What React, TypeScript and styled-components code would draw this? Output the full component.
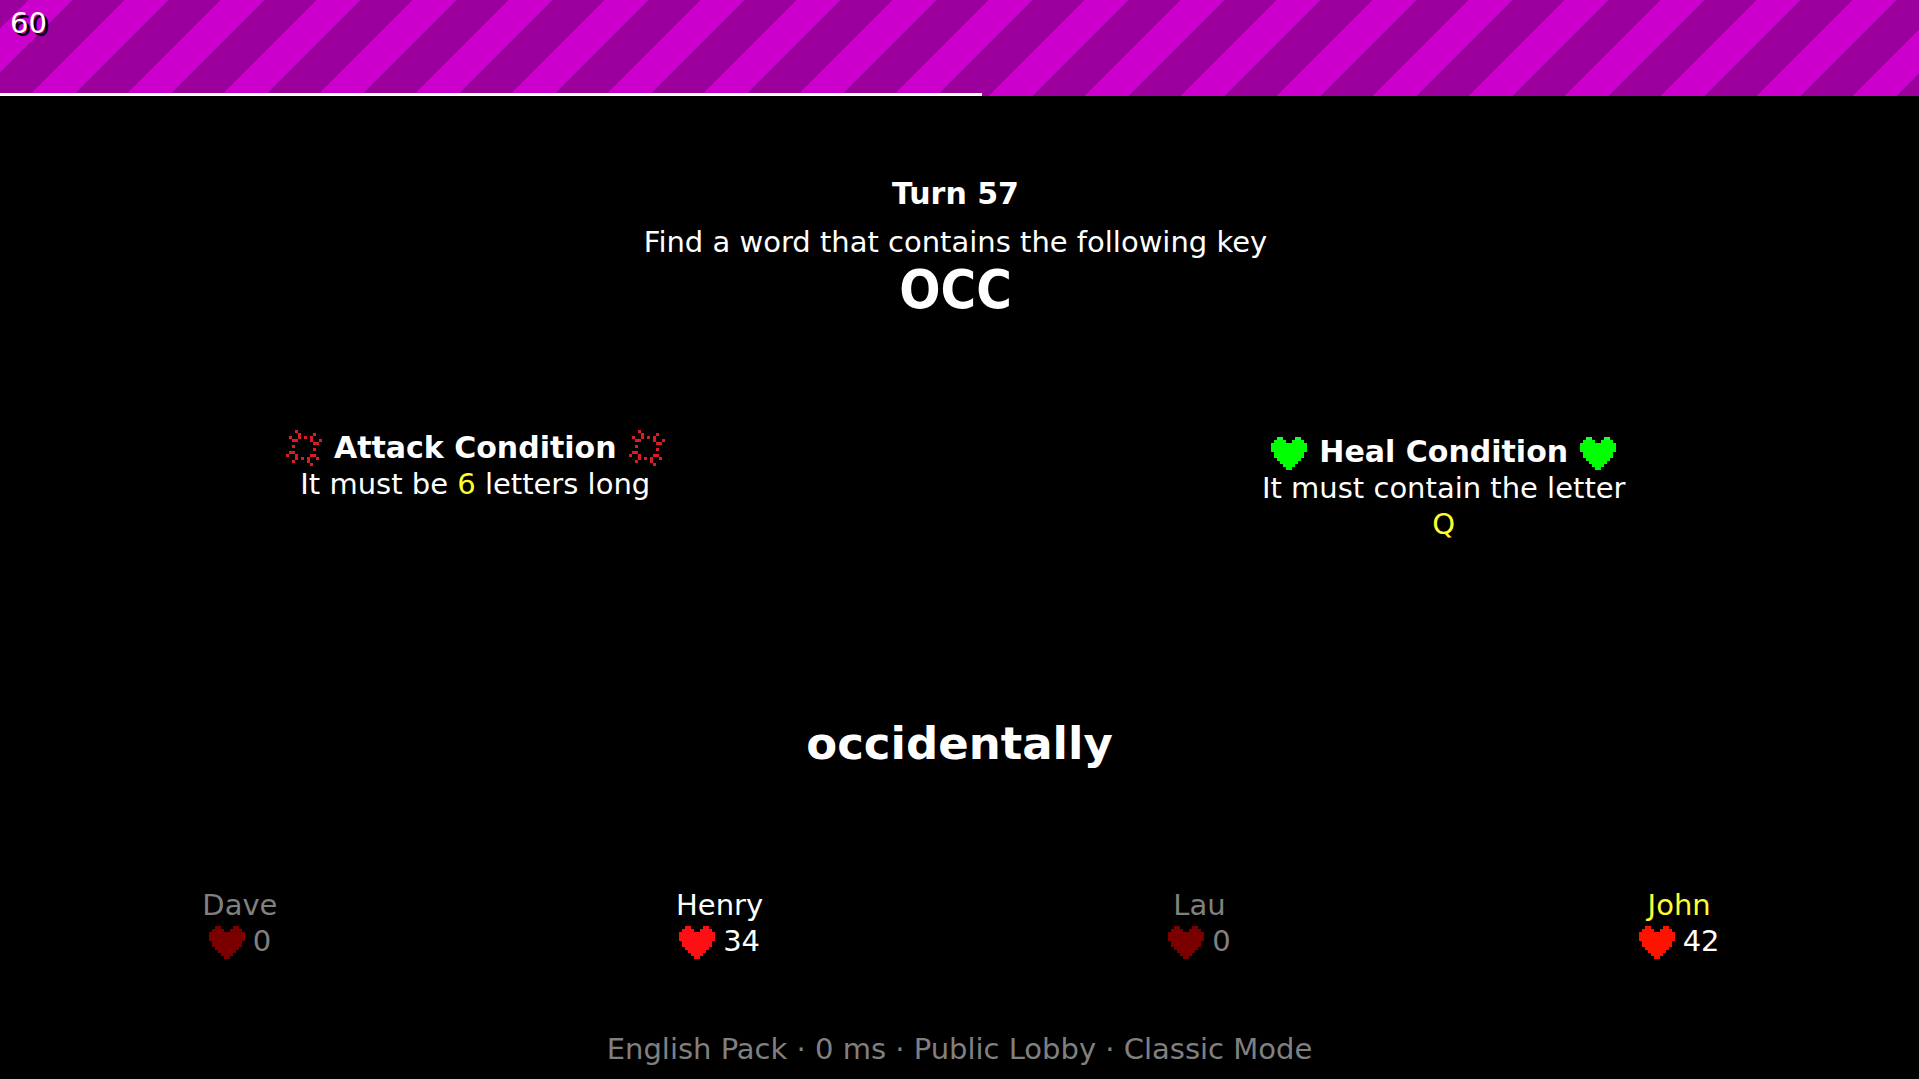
import React from 'react';
import styled, { createGlobalStyle } from 'styled-components';

const GlobalStyle = createGlobalStyle`
  *, *::before, *::after { box-sizing: border-box; }
  body {
    margin: 0;
    background: #000;
    color: #fff;
    font-family: "DejaVu Sans", Verdana, sans-serif;
    font-size: 29px;
    line-height: 36px;
  }
  h1, h2, p, ul { margin: 0; padding: 0; font-size: inherit; }
`;

const Page = styled.div`
  min-height: 100vh;
  display: flex;
  flex-direction: column;
`;

const TopBar = styled.header`
  height: 96px;
  display: flex;
  flex-direction: column;
  justify-content: space-between;
  background: linear-gradient(
      135deg,
      #9c009c 15%, #cc00cc 15%, #cc00cc 38%,
      #9c009c 38%, #9c009c 65%,
      #cc00cc 65%, #cc00cc 88%, #9c009c 88%
    ) 0 0 / 96px 96px;
`;

const FrameRate = styled.span`
  padding: 5px 10px;
  text-shadow: 3px 3px 0 #000;
`;

const Timer = styled.div`
  height: 3px;
  background: #fff;
`;

const Main = styled.main`
  flex: 1;
  display: flex;
  flex-direction: column;
`;

const Prompt = styled.section`
  padding: 80px 8px 0 0;
  text-align: center;
`;

const Turn = styled.h1`
  margin-bottom: 12px;
  font-size: 30px;
  font-weight: 700;
`;

const Key = styled.p`
  font-family: "DejaVu Sans Condensed", "DejaVu Sans", sans-serif;
  font-size: 54px;
  font-weight: 700;
  line-height: 60px;
`;

const Conditions = styled.div`
  display: grid;
  grid-template-columns: 1fr 1fr;
  column-gap: 18px;
  margin-top: 110px;
`;

const Condition = styled.section<{ $offset?: number }>`
  padding-top: ${p => p.$offset ?? 0}px;
  text-align: center;
`;

const ConditionTitle = styled.h2`
  height: 36px;
  display: flex;
  align-items: flex-end;
  justify-content: center;
  gap: 12px;
  font-size: 30px;
  font-weight: 700;
`;

const Rule = styled.p`
  max-width: 380px;
  margin: 0 auto;
`;

const Value = styled.span`
  color: #ffff30;
`;

const Word = styled.p`
  margin-top: auto;
  text-align: center;
  font-size: 45px;
  font-weight: 700;
  line-height: 60px;
`;

const Players = styled.ul`
  display: grid;
  grid-template-columns: repeat(4, 1fr);
  margin-top: 113px;
  list-style: none;
`;

const PlayerItem = styled.li<{ $out: boolean }>`
  text-align: center;
  color: ${p => (p.$out ? '#808080' : '#fff')};
`;

const PlayerName = styled.p<{ $active: boolean }>`
  color: ${p => (p.$active ? '#ffff30' : 'inherit')};
`;

const Lives = styled.p`
  height: 36px;
  display: flex;
  align-items: flex-end;
  justify-content: center;
  gap: 8px;
`;

const Footer = styled.footer`
  padding: 72px 0 12px;
  text-align: center;
  color: #808080;
`;

const SpriteSvg = styled.svg`
  display: block;
  flex: none;
`;

const HEART = [
  '..##....##..',
  '.####..####.',
  '############',
  '############',
  '############',
  '.##########.',
  '.##########.',
  '..########..',
  '...######...',
  '....####....',
  '.....##.....',
];

const BURST = [
  '...#........',
  '....#....#..',
  '.#..#.#.#...',
  '..##....#..#',
  '.........##.',
  '..#.........',
  '.........#..',
  '.##.........',
  '#..#....##..',
  '...#.#.#..#.',
  '..#....#....',
  '........#...',
];

function Sprite({ rows, color, top }: { rows: string[]; color: string; top?: string }) {
  return (
    <SpriteSvg
      width={36}
      height={rows.length * 3}
      viewBox={`0 0 12 ${rows.length}`}
      shapeRendering="crispEdges"
      aria-hidden="true"
    >
      {rows.flatMap((row, y) =>
        [...row].map((cell, x) =>
          cell === '#' ? (
            <rect key={`${x}-${y}`} x={x} y={y} width={1} height={1} fill={y === 0 && top ? top : color} />
          ) : null,
        ),
      )}
    </SpriteSvg>
  );
}

interface Player {
  name: string;
  lives: number;
  heart: string;
  active?: boolean;
}

const players: Player[] = [
  { name: 'Dave', lives: 0, heart: '#7a0000' },
  { name: 'Henry', lives: 34, heart: '#ff0f14' },
  { name: 'Lau', lives: 0, heart: '#7a0000' },
  { name: 'John', lives: 42, heart: '#ff1200', active: true },
];

export default function App() {
  return (
    <Page>
      <GlobalStyle />
      <TopBar>
        <FrameRate>60</FrameRate>
        <Timer style={{ width: `${(982 / 1919) * 100}%` }} />
      </TopBar>
      <Main>
        <Prompt>
          <Turn>Turn 57</Turn>
          <p>Find a word that contains the following key</p>
          <Key>OCC</Key>
        </Prompt>
        <Conditions>
          <Condition>
            <ConditionTitle>
              <Sprite rows={BURST} color="#dc1c24" />
              Attack Condition
              <Sprite rows={BURST} color="#dc1c24" />
            </ConditionTitle>
            <Rule>It must be <Value>6</Value> letters long</Rule>
          </Condition>
          <Condition $offset={4}>
            <ConditionTitle>
              <Sprite rows={HEART} color="#00ff00" top="#28f83c" />
              Heal Condition
              <Sprite rows={HEART} color="#00ff00" top="#28f83c" />
            </ConditionTitle>
            <Rule>It must contain the letter <Value>Q</Value></Rule>
          </Condition>
        </Conditions>
        <Word>occidentally</Word>
        <Players>
          {players.map(p => (
            <PlayerItem key={p.name} $out={p.lives === 0}>
              <PlayerName $active={!!p.active}>{p.name}</PlayerName>
              <Lives>
                <Sprite rows={HEART} color={p.heart} />
                {p.lives}
              </Lives>
            </PlayerItem>
          ))}
        </Players>
      </Main>
      <Footer>English Pack · 0 ms · Public Lobby · Classic Mode</Footer>
    </Page>
  );
}
